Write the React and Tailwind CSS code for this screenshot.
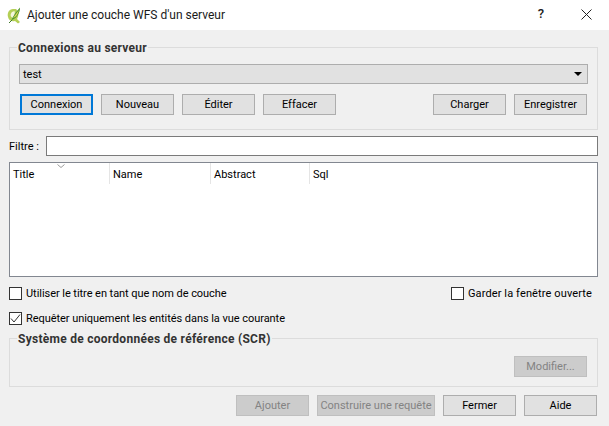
import React from 'react';

const FONT = 'font-["Roboto","Open_Sans",sans-serif]';

const Btn = ({ children, w = 'w-[73px]', focus, disabled }) => (
  <button
    className={`${w} h-[21px] shrink-0 whitespace-nowrap text-[11px] leading-none ${
      focus
        ? 'border-2 border-[#0078d7] bg-[#e1e1e1] text-[#000]'
        : disabled
        ? 'border border-[#bfbfbf] bg-[#cccccc] text-[#838383]'
        : 'border border-[#adadad] bg-[#e1e1e1] text-[#000]'
    }`}
  >
    {children}
  </button>
);

const Group = ({ title, className, children }) => (
  <div className={`relative border border-[#dcdcdc] ${className}`}>
    <span className="absolute left-[7px] top-[-8px] whitespace-nowrap bg-[#f0f0f0] px-px text-[12px] leading-[16px] font-bold tracking-[0.27px] text-[#333]">
      {title}
    </span>
    {children}
  </div>
);

const Check = ({ checked, wide, children }) => (
  <label className="flex items-center gap-[4px] text-[11px] leading-[16px] text-[#000]">
    <span className="flex h-[13px] w-[13px] items-center justify-center border border-[#333] bg-white">
      {checked && (
        <svg width="11" height="11" viewBox="0 0 11 11" fill="none">
          <path d="M1 5.5 L4 9 L10 1.5" stroke="#333" strokeWidth="1" />
        </svg>
      )}
    </span>
    <span className={`mt-[2px] ${wide ? 'tracking-[0.12px]' : 'tracking-[-0.05px]'}`}>{children}</span>
  </label>
);

const QgisIcon = () => (
  <svg width="14" height="17" viewBox="0 0 14 17">
    <path d="M6 2 C2 2 0 6 1 10 C2 14 5 15 8 14 L11 16.5 L13 15 L10 12 C12 9 12 4 9 2 Z" fill="#b4cf55" />
    <path d="M5 5 C3 7 3 10 6 11 C8 9 8 6 7.5 4 Z" fill="#f4f6dc" />
    <path d="M4 14 C6 9 9 5 13 0.5 C13 6 10 11 5 13 Z" fill="#4f9433" />
    <path d="M6 11 C8 8 10 6 12 3 C11 7 9 10 6 11 Z" fill="#e4d94e" />
    <path d="M2 16 L5 13" stroke="#3f7a2a" strokeWidth="1" />
  </svg>
);

export default function App() {
  return (
    <div className={`flex h-[426px] w-[609px] flex-col overflow-hidden bg-[#f0f0f0] ${FONT}`}>
      {/* barre de titre */}
      <div className="flex h-[30px] shrink-0 items-center bg-white pl-[7px]">
        <QgisIcon />
        <span className="ml-[6px] text-[12px] text-[#1a1a1a]">
          Ajouter une couche WFS d'un serveur
        </span>
        <span className="mb-[2px] ml-auto mr-[37px] text-[13px] font-medium text-[#222]">?</span>
        <svg className="mb-[2px] mr-[17px]" width="11" height="11" viewBox="0 0 11 11" fill="none">
          <path d="M0.5 0.5 L10.5 10.5 M10.5 0.5 L0.5 10.5" stroke="#222" strokeWidth="1" />
        </svg>
      </div>

      <div className="flex flex-1 flex-col pl-[9px] pr-[11px]">
        <Group title="Connexions au serveur" className="mt-[17px] h-[83px] w-[589px] shrink-0 px-[9px] pt-[16px]">
          <div className="flex h-[20px] w-[569px] items-center justify-between border border-[#adadad] bg-[#e1e1e1] pl-[3px] pr-[5px] text-[11px] text-[#000]">
            <span className="mt-[2px]">test</span>
            <span className="h-0 w-0 border-x-[4px] border-t-[4px] border-x-transparent border-t-black" />
          </div>
          <div className="mt-[10px] flex gap-[8px] pl-px pr-px">
            <Btn focus>Connexion</Btn>
            <Btn>Nouveau</Btn>
            <Btn>Éditer</Btn>
            <Btn>Effacer</Btn>
            <div className="ml-auto flex gap-[8px]">
              <Btn>Charger</Btn>
              <Btn>Enregistrer</Btn>
            </div>
          </div>
        </Group>

        <div className="mt-[6px] flex h-[20px] shrink-0 items-center">
          <span className="mt-[2px] w-[37px] text-[11px] text-[#000]">Filtre :</span>
          <div className="h-[20px] flex-1 border border-[#7a7a7a] bg-white" />
        </div>

        <div className="relative mt-[6px] h-[115px] shrink-0 border border-[#828790] bg-white">
          <svg className="absolute left-[47px] top-[1px]" width="8" height="4" viewBox="0 0 8 4" fill="none">
            <path d="M0.5 0.5 L4 3.5 L7.5 0.5" stroke="#9a9a9a" strokeWidth="1" />
          </svg>
          <div className="flex h-[21px] text-[11px] leading-[24px] text-[#000]">
            <div className="w-[100px] border-r border-[#e5e5e5] pl-[3px]">Title</div>
            <div className="w-[101px] border-r border-[#e5e5e5] pl-[3px]">Name</div>
            <div className="w-[99px] border-r border-[#e5e5e5] pl-[3px]">Abstract</div>
            <div className="flex-1 pl-[3px]">Sql</div>
          </div>
        </div>

        <div className="mt-[8px] flex h-[16px] shrink-0 items-center justify-between pr-[6px]">
          <Check>Utiliser le titre en tant que nom de couche</Check>
          <Check wide>Garder la fenêtre ouverte</Check>
        </div>

        <div className="mt-[9px] flex h-[16px] shrink-0 items-center">
          <Check checked>Requêter uniquement les entités dans la vue courante</Check>
        </div>

        <Group
          title="Système de coordonnées de référence (SCR)"
          className="mt-[12px] flex h-[49px] w-[589px] shrink-0 items-start justify-end pr-[10px] pt-[17px]"
        >
          <Btn disabled>Modifier...</Btn>
        </Group>

        <div className="mt-[8px] flex justify-end gap-[8px] pr-px">
          <Btn disabled>Ajouter</Btn>
          <Btn disabled w="w-[118px]">Construire une requête</Btn>
          <Btn>Fermer</Btn>
          <Btn>Aide</Btn>
        </div>
      </div>
    </div>
  );
}
